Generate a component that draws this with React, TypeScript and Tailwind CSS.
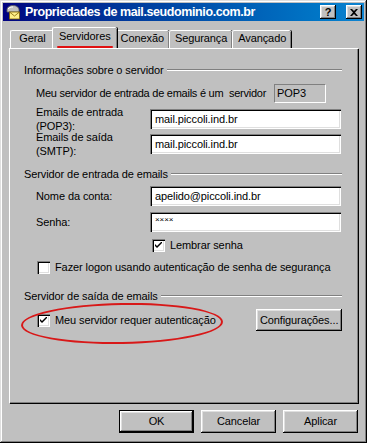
import type { ReactNode } from 'react';

const raised =
  'shadow-[inset_-1px_-1px_#000,inset_1px_1px_#fff,inset_-2px_-2px_#808080,inset_2px_2px_#dfdfdf]';
const sunken =
  'shadow-[inset_1px_1px_#808080,inset_2px_2px_#000,inset_-1px_-1px_#fff,inset_-2px_-2px_#dfdfdf]';

function MailIcon() {
  return (
    <svg width="16" height="16" viewBox="0 0 16 16" className="shrink-0">
      <path d="M2 6 C2 3 5 1.5 8 1.5 C11 1.5 14 3 14 6 L14 8 L2 8 Z" fill="#c0c0c0" stroke="#606060" strokeWidth="0.8" />
      <path d="M3 5 C4 3.5 6 3 8 3" fill="none" stroke="#fff" strokeWidth="1" />
      <rect x="4.5" y="8" width="10" height="7" fill="#ffef8a" stroke="#806000" strokeWidth="0.8" />
      <path d="M4.5 8 L9.5 12 L14.5 8" fill="none" stroke="#806000" strokeWidth="0.8" />
    </svg>
  );
}

function TitleButton({ children }: { children: ReactNode }) {
  return (
    <div
      className={`w-[16px] h-[14px] bg-[#c0c0c0] ${raised} flex items-center justify-center text-[11px] font-bold leading-none text-black`}
    >
      {children}
    </div>
  );
}

function Tab({ label, active, className = '' }: { label: string; active?: boolean; className?: string }) {
  if (active) {
    return (
      <div className="relative -mx-[2px] z-10 self-stretch h-[21px] px-[6px] pt-[2px] bg-[#c0c0c0] border-l border-t border-white rounded-t-[2px] shadow-[inset_-1px_0_#808080,1px_0_#000]">
        <span className="relative">
          {label}
          <span className="absolute left-[-2px] right-[-2px] top-[16px] h-[2px] bg-[#e01010] rounded-full" />
        </span>
      </div>
    );
  }
  return (
    <div
      className={`h-[18px] mt-[3px] px-[5px] pt-[1px] text-center bg-[#c0c0c0] border-l border-t border-white rounded-t-[2px] shadow-[inset_-1px_0_#808080,1px_0_#000] ${className}`}
    >
      {label}
    </div>
  );
}

function Section({ title }: { title: string }) {
  return (
    <div className="flex items-center h-[14px]">
      <span className="pr-[3px]">{title}</span>
      <div className="flex-1 border-t border-[#808080] border-b border-b-white" />
    </div>
  );
}

function Field({ value, small }: { value: string; small?: boolean }) {
  return (
    <div className={`w-[191px] h-[20px] bg-white ${sunken} flex items-center px-[5px]`}>
      <span className={small ? 'text-[8px] leading-none -mt-[5px]' : ''}>{value}</span>
    </div>
  );
}

function Check({ checked }: { checked?: boolean }) {
  return (
    <div className={`w-[13px] h-[13px] bg-white ${sunken} shrink-0 flex items-center justify-center`}>
      {checked && (
        <svg width="7" height="7" viewBox="0 0 7 7">
          <path d="M0 2 L0 4 L2 6 L7 1 L7 -1 L2 4 Z" fill="#000" />
        </svg>
      )}
    </div>
  );
}

function Button({ label, def, className = '' }: { label: string; def?: boolean; className?: string }) {
  if (def) {
    return (
      <div className={`border border-black ${className}`}>
        <div className={`h-full bg-[#c0c0c0] ${raised} flex items-center justify-center`}>{label}</div>
      </div>
    );
  }
  return (
    <div className={`bg-[#c0c0c0] ${raised} flex items-center justify-center ${className}`}>{label}</div>
  );
}

export default function App() {
  return (
    <div
      className="w-[367px] h-[443px] bg-[#c0c0c0] p-[3px] text-[11px] leading-[13px] tracking-[-0.1px] text-black shadow-[inset_-1px_-1px_#000,inset_1px_1px_#dfdfdf,inset_-2px_-2px_#808080,inset_2px_2px_#fff]"
      style={{ fontFamily: '"Liberation Sans", Arial, sans-serif' }}
    >
      {/* barra de título */}
      <div className="h-[18px] flex items-center pl-[2px] pr-[2px] gap-[4px] bg-gradient-to-r from-[#000080] to-[#1084d0]">
        <MailIcon />
        <span className="flex-1 text-white font-bold text-[12.5px] tracking-[-0.4px]">
          Propriedades de mail.seudominio.com.br
        </span>
        <TitleButton>?</TitleButton>
        <div className="w-[2px]" />
        <TitleButton>
          <svg width="8" height="7" viewBox="0 0 8 7">
            <path d="M0 0 L2 0 L4 2 L6 0 L8 0 L5 3.5 L8 7 L6 7 L4 5 L2 7 L0 7 L3 3.5 Z" fill="#000" />
          </svg>
        </TitleButton>
      </div>

      {/* abas */}
      <div className="flex items-start h-[21px] mt-[6px] pl-[7px]">
        <Tab label="Geral" className="w-[44px]" />
        <Tab label="Servidores" active />
        <Tab label="Conexão" />
        <Tab label="Segurança" />
        <Tab label="Avançado" />
      </div>

      {/* painel */}
      <div className="relative mx-[6px] h-[355px] border-l border-t border-white shadow-[inset_-1px_-1px_#808080,1px_1px_#000] pl-[14px] pr-[16px] pt-[14px]">
        <Section title="Informações sobre o servidor" />
        <div className="flex items-center h-[20px] mt-[6px] pl-[12px]">
          <span className="w-[238px] whitespace-nowrap tracking-[-0.25px]">
            Meu servidor de entrada de emails é um&nbsp; servidor
          </span>
          <div className="w-[52px] h-[19px] border border-[#808080] border-r-white border-b-white flex items-center px-[2px]">
            POP3
          </div>
        </div>
        <div className="flex items-center h-[20px] mt-[6px] pl-[12px]">
          <span className="w-[114px] leading-[14px]">
            Emails de entrada
            <br />
            (POP3):
          </span>
          <Field value="mail.piccoli.ind.br" />
        </div>
        <div className="flex items-center h-[20px] mt-[5px] pl-[12px]">
          <span className="w-[114px] leading-[14px]">
            Emails de saída
            <br />
            (SMTP):
          </span>
          <Field value="mail.piccoli.ind.br" />
        </div>

        <div className="mt-[13px]">
          <Section title="Servidor de entrada de emails" />
        </div>
        <div className="flex items-center h-[20px] mt-[5px] pl-[12px]">
          <span className="w-[114px]">Nome da conta:</span>
          <Field value="apelido@piccoli.ind.br" />
        </div>
        <div className="flex items-center h-[20px] mt-[6px] pl-[12px]">
          <span className="w-[114px]">Senha:</span>
          <Field value="××××" small />
        </div>
        <div className="flex items-center gap-[5px] h-[13px] mt-[7px] pl-[128px]">
          <Check checked />
          <span>Lembrar senha</span>
        </div>
        <div className="flex items-center gap-[5px] h-[13px] mt-[9px] pl-[13px]">
          <Check />
          <span>Fazer logon usando autenticação de senha de segurança</span>
        </div>

        <div className="mt-[15px]">
          <Section title="Servidor de saída de emails" />
        </div>
        <div className="flex items-center h-[22px] mt-[6px]">
          <div className="flex items-center gap-[5px] pl-[13px] w-[233px]">
            <Check checked />
            <span>Meu servidor requer autenticação</span>
          </div>
          <Button label="Configurações..." className="w-[86px] h-[22px]" />
        </div>

        {/* marcação em vermelho */}
        <div className="absolute left-[11px] top-[254px] w-[202px] h-[41px] rounded-[50%] border-[2px] border-[#d81818] -rotate-[1deg]" />
      </div>

      {/* botões */}
      <div className="flex justify-end gap-[7px] mt-[7px] pr-[6px]">
        <Button label="OK" def className="w-[75px] h-[23px]" />
        <Button label="Cancelar" className="w-[75px] h-[23px]" />
        <Button label="Aplicar" className="w-[75px] h-[23px]" />
      </div>
    </div>
  );
}
